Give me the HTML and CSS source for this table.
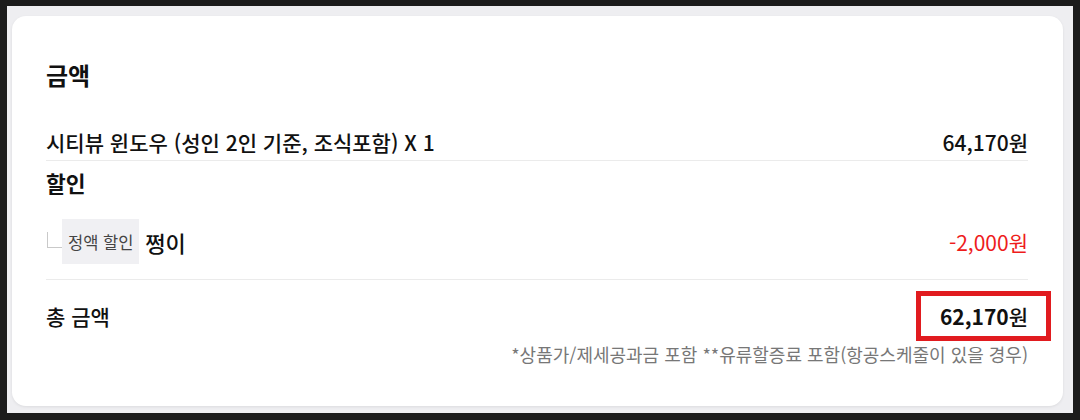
FILE: index.html
```html
<!DOCTYPE html>
<html lang="ko">
<head>
<meta charset="utf-8">
<link rel="stylesheet" href="styles.css">
</head>
<body>
<div class="frame">
  <div class="stage">
    <section class="card">
      <h2 class="title">금액</h2>
      <div class="row row-item">
        <span class="label">시티뷰 윈도우 (성인 2인 기준, 조식포함) X 1</span>
        <span class="price">64,170원</span>
      </div>
      <div class="sub-title">할인</div>
      <div class="row row-discount">
        <div class="discount-left">
          <span class="connector"></span>
          <span class="tag">정액 할인</span>
          <span class="discount-name">쩡이</span>
        </div>
        <span class="price minus">-2,000원</span>
      </div>
      <div class="row row-total">
        <span class="label">총 금액</span>
        <span class="total"><b>62,170</b>원</span>
      </div>
      <p class="note">*상품가/제세공과금 포함 **유류할증료 포함(항공스케줄이 있을 경우)</p>
    </section>
  </div>
</div>
</body>
</html>
```

FILE: styles.css
```css
html, body {
  margin: 0;
  padding: 0;
  background: #1b1b1b;
}
body {
  width: 1080px;
  height: 420px;
  overflow: hidden;
  font-family: "Noto Sans CJK KR", "Noto Sans", sans-serif;
  color: #111;
}
.frame {
  padding: 6px 7px 7px 7px;
  height: 420px;
  box-sizing: border-box;
}
.stage {
  background: #eeeef1;
  height: 407px;
  box-sizing: border-box;
  padding: 10px 10px 7px 5px;
}
.card {
  background: #fff;
  border-radius: 14px;
  height: 390px;
  box-sizing: border-box;
  padding: 43px 35px 0 34px;
  box-shadow: 0 1px 3px rgba(0, 0, 0, 0.08);
}
.title {
  margin: 0;
  font-size: 24px;
  line-height: 32px;
  font-weight: 700;
}
.row {
  display: flex;
  justify-content: space-between;
  align-items: center;
}
.row-item {
  margin-top: 33px;
  height: 36px;
  border-bottom: 1px solid #ebebeb;
}
.label {
  font-size: 21px;
  font-weight: 500;
}
.price {
  font-size: 21px;
  font-weight: 500;
}
.sub-title {
  font-size: 21.5px;
  line-height: 28px;
  font-weight: 700;
  padding-top: 8px;
}
.row-discount {
  margin-top: 22px;
  padding-bottom: 15px;
  border-bottom: 1px solid #ebebeb;
}
.discount-left {
  display: flex;
  align-items: center;
}
.connector {
  width: 15px;
  height: 16px;
  box-sizing: border-box;
  border-left: 1px solid #c9c9c9;
  border-bottom: 1px solid #c9c9c9;
  margin-left: 1px;
  align-self: flex-start;
  margin-top: 13px;
}
.tag {
  display: flex;
  align-items: center;
  height: 45px;
  padding: 0 6px;
  background: #f0f0f3;
  color: #444;
  font-size: 16.5px;
}
.discount-name {
  margin-left: 6px;
  font-size: 22px;
  font-weight: 500;
}
.minus {
  color: #ee1c1c;
  font-weight: 400;
}
.row-total {
  padding-top: 16px;
  height: 40px;
}
.total {
  position: relative;
  font-size: 21px;
  line-height: 40px;
  font-weight: 500;
}
.total b {
  font-weight: 700;
}
.total::after {
  content: "";
  position: absolute;
  top: -5px;
  bottom: -5px;
  left: -24px;
  right: -23px;
  border: 5px solid #e11b1f;
}
.note {
  margin: 6px 0 0;
  text-align: right;
  font-size: 18px;
  line-height: 24px;
  color: #777;
}
```
